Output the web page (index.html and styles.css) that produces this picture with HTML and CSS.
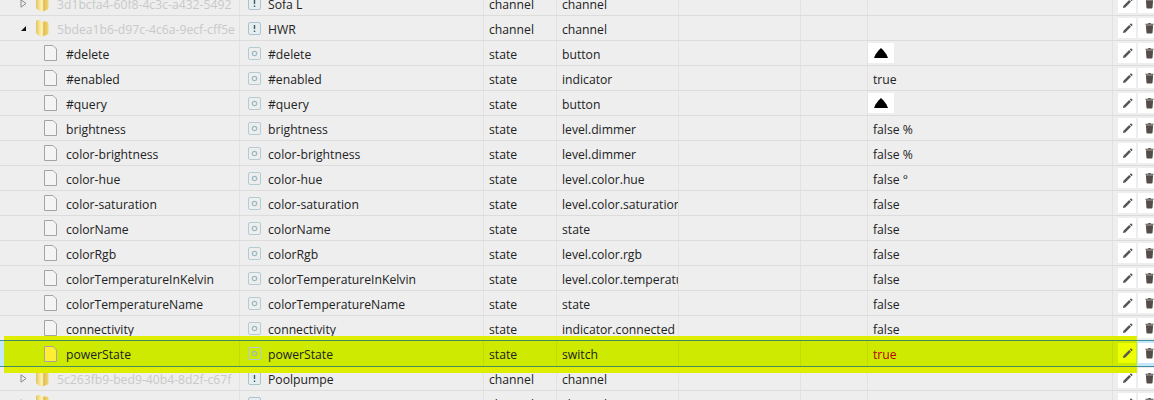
FILE: index.html
```html
<!DOCTYPE html>
<html lang="en">
<head>
    <title>Objects</title>
    <link rel="stylesheet" href="styles.css">
</head>
<body>
    <svg class="icon-defs" width="0" height="0">
        <defs>
            <linearGradient id="folder-fill" x1="0" x2="1" y1="0" y2="0">
                <stop offset="0" stop-color="#e2c262"/>
                <stop offset=".3" stop-color="#f8e694"/>
                <stop offset=".5" stop-color="#fdf4c0"/>
                <stop offset=".62" stop-color="#e0bd52"/>
                <stop offset="1" stop-color="#f2d872"/>
            </linearGradient>
        </defs>
        <symbol id="folder" viewBox="0 0 14 18">
            <path d="M1 3 Q1 1 3 1 L5 1 L6.5 2.5 L11 2.5 Q13.5 2.5 13.5 5 L13.5 14 Q13.5 16 11 16 L8 17.5 Q5 17.5 3 16 Q1 15 1 13 Z" fill="url(#folder-fill)"/>
        </symbol>
        <symbol id="arrow-closed" viewBox="0 0 7 9">
            <path d="M1 .8 L6 4.5 L1 8.2 Z" fill="none" stroke="#8a8a8a"/>
        </symbol>
        <symbol id="arrow-open" viewBox="0 0 7 7">
            <path d="M6 1 V6 H1 Z" fill="#111"/>
        </symbol>
        <symbol id="file" viewBox="0 0 13 16">
            <path d="M.5 .5 H9 L12.5 4 V15.5 H.5 Z" fill="currentColor" stroke="#a4a4a4"/>
        </symbol>
        <symbol id="channel" viewBox="0 0 13 13">
            <rect x=".5" y=".5" width="12" height="12" rx="1.5" fill="#e6eef0" stroke="#a9c4cc"/>
            <path d="M6.5 3 V7 M6.5 8.5 V10" stroke="#3d5a64" stroke-width="1.4"/>
        </symbol>
        <symbol id="state" viewBox="0 0 13 13">
            <rect x=".5" y=".5" width="12" height="12" rx="1.5" fill="none" stroke="#b3ccd3"/>
            <circle cx="6.5" cy="6.5" r="2.2" fill="none" stroke="#9dbac3" stroke-width="1.2"/>
        </symbol>
        <symbol id="pencil" viewBox="0 0 12 12">
            <path d="M1 11 L1.6 8.4 L7.8 2.2 L9.8 4.2 L3.6 10.4 Z M8.5 1.5 L9.4 .6 Q10 .2 10.5 .7 L11.3 1.5 Q11.7 2 11.3 2.6 L10.5 3.5 Z" fill="#555"/>
        </symbol>
        <symbol id="trash" viewBox="0 0 10 12">
            <path d="M1 3 H9 L8.4 11 Q8.3 12 7.4 12 H2.6 Q1.7 12 1.6 11 Z M.5 1.2 H3.4 L3.9 .4 H6.1 L6.6 1.2 H9.5 V2.4 H.5 Z" fill="#544c48"/>
        </symbol>
    </svg>

    <div class="tree">
        <div class="row">
            <div class="cell id folder-cell"><svg class="ic-arrow"><use href="#arrow-closed"/></svg><svg class="ic-folder"><use href="#folder"/></svg><span class="dim">3d1bcfa4-60f8-4c3c-a432-5492</span></div>
            <div class="cell name"><svg class="ic-type"><use href="#channel"/></svg>Sofa L</div>
            <div class="cell">channel</div>
            <div class="cell">channel</div>
            <div class="cell"></div><div class="cell"></div>
            <div class="cell"></div>
            <div class="actions"><button class="btn"><svg class="ic-pencil"><use href="#pencil"/></svg></button><button class="btn"><svg class="ic-trash"><use href="#trash"/></svg></button></div>
        </div>
        <div class="row">
            <div class="cell id folder-cell"><svg class="ic-arrow"><use href="#arrow-open"/></svg><svg class="ic-folder"><use href="#folder"/></svg><span class="dim">5bdea1b6-d97c-4c6a-9ecf-cff5e</span></div>
            <div class="cell name"><svg class="ic-type"><use href="#channel"/></svg>HWR</div>
            <div class="cell">channel</div>
            <div class="cell">channel</div>
            <div class="cell"></div><div class="cell"></div>
            <div class="cell"></div>
            <div class="actions"><button class="btn"><svg class="ic-pencil"><use href="#pencil"/></svg></button><button class="btn"><svg class="ic-trash"><use href="#trash"/></svg></button></div>
        </div>
        <div class="row">
            <div class="cell id"><svg class="ic-file"><use href="#file"/></svg>#delete</div>
            <div class="cell name"><svg class="ic-type"><use href="#state"/></svg>#delete</div>
            <div class="cell">state</div>
            <div class="cell">button</div>
            <div class="cell"></div><div class="cell"></div>
            <div class="cell value"><span class="push"><span class="dome"></span></span></div>
            <div class="actions"><button class="btn"><svg class="ic-pencil"><use href="#pencil"/></svg></button><button class="btn"><svg class="ic-trash"><use href="#trash"/></svg></button></div>
        </div>
        <div class="row">
            <div class="cell id"><svg class="ic-file"><use href="#file"/></svg>#enabled</div>
            <div class="cell name"><svg class="ic-type"><use href="#state"/></svg>#enabled</div>
            <div class="cell">state</div>
            <div class="cell">indicator</div>
            <div class="cell"></div><div class="cell"></div>
            <div class="cell value">true</div>
            <div class="actions"><button class="btn"><svg class="ic-pencil"><use href="#pencil"/></svg></button><button class="btn"><svg class="ic-trash"><use href="#trash"/></svg></button></div>
        </div>
        <div class="row">
            <div class="cell id"><svg class="ic-file"><use href="#file"/></svg>#query</div>
            <div class="cell name"><svg class="ic-type"><use href="#state"/></svg>#query</div>
            <div class="cell">state</div>
            <div class="cell">button</div>
            <div class="cell"></div><div class="cell"></div>
            <div class="cell value"><span class="push"><span class="dome"></span></span></div>
            <div class="actions"><button class="btn"><svg class="ic-pencil"><use href="#pencil"/></svg></button><button class="btn"><svg class="ic-trash"><use href="#trash"/></svg></button></div>
        </div>
        <div class="row">
            <div class="cell id"><svg class="ic-file"><use href="#file"/></svg>brightness</div>
            <div class="cell name"><svg class="ic-type"><use href="#state"/></svg>brightness</div>
            <div class="cell">state</div>
            <div class="cell">level.dimmer</div>
            <div class="cell"></div><div class="cell"></div>
            <div class="cell value">false %</div>
            <div class="actions"><button class="btn"><svg class="ic-pencil"><use href="#pencil"/></svg></button><button class="btn"><svg class="ic-trash"><use href="#trash"/></svg></button></div>
        </div>
        <div class="row">
            <div class="cell id"><svg class="ic-file"><use href="#file"/></svg>color-brightness</div>
            <div class="cell name"><svg class="ic-type"><use href="#state"/></svg>color-brightness</div>
            <div class="cell">state</div>
            <div class="cell">level.dimmer</div>
            <div class="cell"></div><div class="cell"></div>
            <div class="cell value">false %</div>
            <div class="actions"><button class="btn"><svg class="ic-pencil"><use href="#pencil"/></svg></button><button class="btn"><svg class="ic-trash"><use href="#trash"/></svg></button></div>
        </div>
        <div class="row">
            <div class="cell id"><svg class="ic-file"><use href="#file"/></svg>color-hue</div>
            <div class="cell name"><svg class="ic-type"><use href="#state"/></svg>color-hue</div>
            <div class="cell">state</div>
            <div class="cell">level.color.hue</div>
            <div class="cell"></div><div class="cell"></div>
            <div class="cell value">false °</div>
            <div class="actions"><button class="btn"><svg class="ic-pencil"><use href="#pencil"/></svg></button><button class="btn"><svg class="ic-trash"><use href="#trash"/></svg></button></div>
        </div>
        <div class="row">
            <div class="cell id"><svg class="ic-file"><use href="#file"/></svg>color-saturation</div>
            <div class="cell name"><svg class="ic-type"><use href="#state"/></svg>color-saturation</div>
            <div class="cell">state</div>
            <div class="cell">level.color.saturation</div>
            <div class="cell"></div><div class="cell"></div>
            <div class="cell value">false</div>
            <div class="actions"><button class="btn"><svg class="ic-pencil"><use href="#pencil"/></svg></button><button class="btn"><svg class="ic-trash"><use href="#trash"/></svg></button></div>
        </div>
        <div class="row">
            <div class="cell id"><svg class="ic-file"><use href="#file"/></svg>colorName</div>
            <div class="cell name"><svg class="ic-type"><use href="#state"/></svg>colorName</div>
            <div class="cell">state</div>
            <div class="cell">state</div>
            <div class="cell"></div><div class="cell"></div>
            <div class="cell value">false</div>
            <div class="actions"><button class="btn"><svg class="ic-pencil"><use href="#pencil"/></svg></button><button class="btn"><svg class="ic-trash"><use href="#trash"/></svg></button></div>
        </div>
        <div class="row">
            <div class="cell id"><svg class="ic-file"><use href="#file"/></svg>colorRgb</div>
            <div class="cell name"><svg class="ic-type"><use href="#state"/></svg>colorRgb</div>
            <div class="cell">state</div>
            <div class="cell">level.color.rgb</div>
            <div class="cell"></div><div class="cell"></div>
            <div class="cell value">false</div>
            <div class="actions"><button class="btn"><svg class="ic-pencil"><use href="#pencil"/></svg></button><button class="btn"><svg class="ic-trash"><use href="#trash"/></svg></button></div>
        </div>
        <div class="row">
            <div class="cell id"><svg class="ic-file"><use href="#file"/></svg>colorTemperatureInKelvin</div>
            <div class="cell name"><svg class="ic-type"><use href="#state"/></svg>colorTemperatureInKelvin</div>
            <div class="cell">state</div>
            <div class="cell">level.color.temperature</div>
            <div class="cell"></div><div class="cell"></div>
            <div class="cell value">false</div>
            <div class="actions"><button class="btn"><svg class="ic-pencil"><use href="#pencil"/></svg></button><button class="btn"><svg class="ic-trash"><use href="#trash"/></svg></button></div>
        </div>
        <div class="row">
            <div class="cell id"><svg class="ic-file"><use href="#file"/></svg>colorTemperatureName</div>
            <div class="cell name"><svg class="ic-type"><use href="#state"/></svg>colorTemperatureName</div>
            <div class="cell">state</div>
            <div class="cell">state</div>
            <div class="cell"></div><div class="cell"></div>
            <div class="cell value">false</div>
            <div class="actions"><button class="btn"><svg class="ic-pencil"><use href="#pencil"/></svg></button><button class="btn"><svg class="ic-trash"><use href="#trash"/></svg></button></div>
        </div>
        <div class="row">
            <div class="cell id"><svg class="ic-file"><use href="#file"/></svg>connectivity</div>
            <div class="cell name"><svg class="ic-type"><use href="#state"/></svg>connectivity</div>
            <div class="cell">state</div>
            <div class="cell">indicator.connected</div>
            <div class="cell"></div><div class="cell"></div>
            <div class="cell value">false</div>
            <div class="actions"><button class="btn"><svg class="ic-pencil"><use href="#pencil"/></svg></button><button class="btn"><svg class="ic-trash"><use href="#trash"/></svg></button></div>
        </div>
        <div class="row selected">
            <div class="cell id"><svg class="ic-file"><use href="#file"/></svg>powerState</div>
            <div class="cell name"><svg class="ic-type"><use href="#state"/></svg>powerState</div>
            <div class="cell">state</div>
            <div class="cell">switch</div>
            <div class="cell"></div><div class="cell"></div>
            <div class="cell value on">true</div>
            <div class="actions"><button class="btn"><svg class="ic-pencil"><use href="#pencil"/></svg></button><button class="btn"><svg class="ic-trash"><use href="#trash"/></svg></button></div>
        </div>
        <div class="row">
            <div class="cell id folder-cell"><svg class="ic-arrow"><use href="#arrow-closed"/></svg><svg class="ic-folder"><use href="#folder"/></svg><span class="dim">5c263fb9-bed9-40b4-8d2f-c67f</span></div>
            <div class="cell name"><svg class="ic-type"><use href="#channel"/></svg>Poolpumpe</div>
            <div class="cell">channel</div>
            <div class="cell">channel</div>
            <div class="cell"></div><div class="cell"></div>
            <div class="cell"></div>
            <div class="actions"><button class="btn"><svg class="ic-pencil"><use href="#pencil"/></svg></button><button class="btn"><svg class="ic-trash"><use href="#trash"/></svg></button></div>
        </div>
        <div class="row">
            <div class="cell id folder-cell"><svg class="ic-arrow"><use href="#arrow-closed"/></svg><svg class="ic-folder"><use href="#folder"/></svg></div>
            <div class="cell name"><svg class="ic-type"><use href="#channel"/></svg></div>
            <div class="cell">channel</div>
            <div class="cell">channel</div>
            <div class="cell"></div><div class="cell"></div>
            <div class="cell"></div>
            <div class="actions"><button class="btn"><svg class="ic-pencil"><use href="#pencil"/></svg></button><button class="btn"><svg class="ic-trash"><use href="#trash"/></svg></button></div>
        </div>
    </div>
</body>
</html>
```

FILE: styles.css
```css
html, body {
    margin: 0;
    padding: 0;
    height: 400px;
    overflow: hidden;
    background-color: #eeeeee;
}

.icon-defs {
    display: block;
    height: 0;
}

.tree {
    margin-top: -9px;
    font-family: "Open Sans", sans-serif;
    font-size: 12.2px;
    color: #222;
}

.row {
    display: grid;
    grid-template-columns: 240px 244px 73px 122px 122px 67px 245px 41px;
    height: 25px;
    box-sizing: border-box;
    border-bottom: 1px solid #dcdcdc;
    position: relative;
}

.cell {
    display: flex;
    align-items: center;
    box-sizing: border-box;
    padding: 2px 0 0 5px;
    border-right: 1px solid #e2e2e2;
    overflow: hidden;
    white-space: nowrap;
    min-width: 0;
}

.cell svg {
    margin-top: -2px;
}

.id {
    padding-left: 44px;
}

.folder-cell {
    padding-left: 20px;
}

.name {
    padding-left: 8px;
}

.dim {
    color: #c9c9c9;
}

.ic-arrow {
    width: 7px;
    height: 9px;
    flex: none;
    margin-right: 8px;
}

.ic-folder {
    width: 14px;
    height: 18px;
    flex: none;
    margin-right: 8px;
}

.ic-file {
    width: 13px;
    height: 16px;
    flex: none;
    margin-right: 9px;
    color: #f4f4f4;
}

.ic-type {
    width: 13px;
    height: 13px;
    flex: none;
    margin-right: 7px;
}

.push {
    display: flex;
    align-items: center;
    justify-content: center;
    width: 26px;
    height: 20px;
    margin: -2px 0 0 -5px;
    background-color: #fff;
}

.dome {
    width: 14px;
    height: 10px;
    background-color: #000;
    clip-path: polygon(0 100%, 12% 62%, 32% 25%, 50% 0, 68% 25%, 88% 62%, 100% 100%);
}

.actions {
    display: flex;
    gap: 2px;
    padding-left: 5px;
    overflow: hidden;
}

.btn {
    flex: none;
    width: 18px;
    height: 20px;
    margin-top: 2px;
    padding: 0;
    border: 0;
    background-color: #fff;
    display: flex;
    align-items: center;
    justify-content: center;
}

.btn:last-child {
    width: 23px;
}

.ic-pencil {
    width: 11px;
    height: 11px;
}

.ic-trash {
    width: 9px;
    height: 12px;
}

.selected {
    z-index: 1;
    height: 27px;
    margin: -1px 0;
    border-bottom: 0;
    background-color: #c4e8fb;
}

.selected::before {
    content: "";
    position: absolute;
    left: 4px;
    right: 17px;
    top: -4px;
    bottom: -6px;
    background-color: #cdea00;
    box-shadow: inset 0 4px 0 #dfee00, inset 0 -6px 0 #dfee00;
}

.selected::after {
    content: "";
    position: absolute;
    left: 0;
    right: 0;
    top: 0;
    bottom: 0;
    box-sizing: border-box;
    border-top: 1px solid rgba(20, 110, 130, .75);
    border-bottom: 1px solid rgba(20, 110, 130, .75);
    pointer-events: none;
}

.selected > * {
    position: relative;
}

.selected .cell {
    border-right-color: rgba(0, 0, 0, .06);
}

.selected .ic-file {
    color: #ffee33;
}

.selected .btn {
    margin-top: 3px;
}

.selected .btn:first-child {
    background-color: #eeff00;
}

.on {
    color: #b80000;
}
```
